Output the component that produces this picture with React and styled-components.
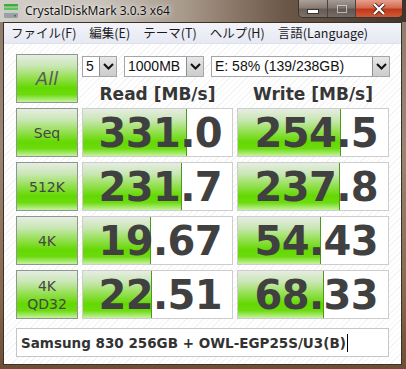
import React from "react";
import styled, { createGlobalStyle } from "styled-components";

const GlobalStyle = createGlobalStyle`
  html, body {
    margin: 0;
    padding: 0;
    background: #6e5a48;
  }
`;

const Window = styled.div`
  width: 406px;
  height: 369px;
  display: flex;
  flex-direction: column;
  background: linear-gradient(180deg, #8e7c6c 0%, #9a8674 40%, #86684e 80%, #6e4e36 100%);
  overflow: hidden;
`;

const TitleBar = styled.div`
  height: 22px;
  display: flex;
  align-items: flex-start;
  background: linear-gradient(
    90deg,
    #d2cec8 0%,
    #c8c2ba 25%,
    #a89a8c 45%,
    #8a7666 58%,
    #6c5848 70%,
    #5a4a3e 82%,
    #40342c 100%
  );
`;

const AppIcon = styled.svg`
  margin: 3px 0 0 3px;
  flex: none;
`;

const Title = styled.div`
  margin: 4px 0 0 6px;
  font-family: "Noto Sans", "Open Sans", sans-serif;
  font-size: 12px;
  line-height: 14px;
  color: #111;
  text-shadow: 0 0 6px rgba(255, 255, 255, 0.9), 0 0 2px rgba(255, 255, 255, 0.8);
`;

const Controls = styled.div`
  margin-left: auto;
  margin-right: 3px;
  display: flex;
  height: 17px;
  border: 1px solid #3a342e;
  border-top: none;
  border-radius: 0 0 5px 5px;
  overflow: hidden;
`;

const CtlButton = styled.div`
  width: ${(p) => p.$w}px;
  display: flex;
  align-items: center;
  justify-content: center;
  border-left: ${(p) => (p.$first ? "none" : "1px solid #4a443e")};
  background: ${(p) =>
    p.$close
      ? "linear-gradient(180deg, #e6a08e 0%, #d46a50 45%, #c0391c 55%, #d05a36 100%)"
      : "linear-gradient(180deg, rgba(255,255,255,0.45) 0%, rgba(230,230,230,0.3) 45%, rgba(120,120,120,0.35) 55%, rgba(160,160,160,0.4) 100%)"};
`;

const MinGlyph = styled.div`
  width: 10px;
  height: 3px;
  background: #fff;
  border: 1px solid #333;
  margin-top: 5px;
`;

const MaxGlyph = styled.div`
  width: 8px;
  height: 6px;
  border: 1px solid rgba(255, 255, 255, 0.55);
  box-shadow: inset 0 0 0 1px rgba(90, 90, 90, 0.4);
`;

const Panel = styled.div`
  flex: 1;
  margin: 0 4px 4px 3px;
  border: 1px solid #3c3028;
  display: flex;
  flex-direction: column;
`;

const MenuBar = styled.div`
  height: 21px;
  display: flex;
  align-items: center;
  padding-left: 1px;
  background: linear-gradient(180deg, #f3f4fa 0%, #e6e9f3 100%);
  border-bottom: 1px solid #dde1ec;
  box-sizing: border-box;
`;

const MenuItem = styled.div`
  padding: 0 6px;
  margin-right: 1px;
  font-family: "Noto Sans CJK JP", "Noto Sans", sans-serif;
  font-size: 12.5px;
  color: #1a1a1a;
  line-height: 16px;
`;

const Client = styled.div`
  flex: 1;
  padding: 10px 11px 0 12px;
  background: repeating-linear-gradient(-45deg, #ffffff 0 3px, #f4f4f4 3px 4px);
  display: flex;
  flex-direction: column;
`;

const TopRow = styled.div`
  display: flex;
  gap: 4px;
  height: 49px;
`;

const greenFill = `linear-gradient(
  180deg,
  #e6ede2 0%,
  #cbe7b8 22%,
  #95e052 48%,
  #64d802 70%,
  #6cdb0e 84%,
  #c6f2a0 100%
)`;

const LabelButton = styled.div`
  width: 62px;
  height: 49px;
  box-sizing: border-box;
  border: 1px solid #8d978d;
  background: ${greenFill};
  display: flex;
  flex-direction: column;
  align-items: center;
  justify-content: center;
  font-family: "DejaVu Sans", sans-serif;
  font-size: ${(p) => (p.$big ? "18px" : "14px")};
  font-style: ${(p) => (p.$big ? "italic" : "normal")};
  line-height: 18px;
  color: ${(p) => (p.$big ? "#5a5a5a" : "#464646")};
`;

const RightCol = styled.div`
  display: flex;
  flex-direction: column;
`;

const SelectRow = styled.div`
  display: flex;
  gap: 7px;
  margin-top: 2px;
  height: 21px;
`;

const Select = styled.div`
  width: ${(p) => p.$w}px;
  box-sizing: border-box;
  border: 1px solid #a4a6ac;
  background: #fff;
  display: flex;
  align-items: stretch;
  font-family: "Liberation Sans", sans-serif;
  font-size: 14px;
  color: #111;
`;

const SelectText = styled.div`
  flex: 1;
  padding-left: 3px;
  line-height: 19px;
  white-space: nowrap;
  overflow: hidden;
`;

const ArrowBtn = styled.div`
  width: 17px;
  margin: 0;
  box-sizing: border-box;
  border-left: 1px solid #8e8e8e;
  background: linear-gradient(180deg, #e8e8e8 0%, #d8d8d8 50%, #cdcdcd 100%);
  display: flex;
  align-items: center;
  justify-content: center;
`;

const HeaderRow = styled.div`
  flex: 1;
  display: grid;
  grid-template-columns: 151px 152px;
  column-gap: 4px;
  align-items: end;
`;

const Header = styled.div`
  text-align: center;
  font-family: "DejaVu Sans", sans-serif;
  font-weight: bold;
  font-size: 17px;
  line-height: 17px;
  color: #363636;
`;

const Rows = styled.div`
  display: flex;
  flex-direction: column;
  gap: 5px;
  margin-top: 5px;
`;

const Row = styled.div`
  display: grid;
  grid-template-columns: 62px 151px 152px;
  column-gap: 4px;
  height: 49px;
`;

const Cell = styled.div`
  position: relative;
  box-sizing: border-box;
  border: 1px solid #cdcdcd;
  background: #fff;
  overflow: hidden;
`;

const Bar = styled.div`
  position: absolute;
  left: 0;
  top: 0;
  bottom: 0;
  box-sizing: border-box;
  border-right: 1px solid #4c9a1a;
  background: ${greenFill};
`;

const Value = styled.div`
  position: relative;
  text-align: right;
  padding: 1px 10px 0 0;
  font-family: "DejaVu Sans", sans-serif;
  font-weight: bold;
  font-size: 40px;
  letter-spacing: -0.6px;
  line-height: 47px;
  color: #404040;
`;

const Comment = styled.div`
  margin-top: 9px;
  width: 373px;
  height: 29px;
  box-sizing: border-box;
  border: 1px solid #c6c6c6;
  background: #fff;
  display: flex;
  align-items: center;
  padding-left: 4px;
  font-family: "DejaVu Sans", sans-serif;
  font-weight: bold;
  font-size: 13.5px;
  color: #333;
  white-space: nowrap;
`;

const Caret = styled.span`
  display: inline-block;
  width: 1px;
  height: 18px;
  background: #000;
  margin-left: 1px;
`;

const Chevron = () => (
  <svg width="11" height="7" viewBox="0 0 11 7">
    <polyline points="1,1 5.5,5.5 10,1" fill="none" stroke="#111" strokeWidth="2" />
  </svg>
);

const results = [
  { label: "Seq", read: "331.0", readBar: 104, write: "254.5", writeBar: 103 },
  { label: "512K", read: "231.7", readBar: 99, write: "237.8", writeBar: 102 },
  { label: "4K", read: "19.67", readBar: 68, write: "54.43", writeBar: 83 },
  { label: ["4K", "QD32"], read: "22.51", readBar: 69, write: "68.33", writeBar: 86 },
];

const menus = ["ファイル(F)", "編集(E)", "テーマ(T)", "ヘルプ(H)", "言語(Language)"];

export default function App() {
  return (
    <>
      <GlobalStyle />
      <Window>
        <TitleBar>
          <AppIcon width="16" height="16" viewBox="0 0 16 16">
            <rect x="1" y="1" width="14" height="2.5" fill="#3cae3c" />
            <rect x="1" y="4.5" width="14" height="2.5" fill="#58c458" />
            <rect x="1" y="8" width="14" height="7" rx="1" fill="#9aa0a4" />
            <rect x="1" y="8" width="14" height="2" fill="#c8ccd0" />
            <rect x="11" y="12" width="2" height="1.5" fill="#3a7a3a" />
          </AppIcon>
          <Title>CrystalDiskMark 3.0.3 x64</Title>
          <Controls>
            <CtlButton $w={28} $first>
              <MinGlyph />
            </CtlButton>
            <CtlButton $w={27}>
              <MaxGlyph />
            </CtlButton>
            <CtlButton $w={46} $close>
              <svg width="14" height="12" viewBox="0 0 14 12">
                <path d="M2 1 L12 11 M12 1 L2 11" stroke="#4a2a22" strokeWidth="4" />
                <path d="M2 1 L12 11 M12 1 L2 11" stroke="#fff" strokeWidth="2.2" />
              </svg>
            </CtlButton>
          </Controls>
        </TitleBar>
        <Panel>
          <MenuBar>
            {menus.map((m) => (
              <MenuItem key={m}>{m}</MenuItem>
            ))}
          </MenuBar>
          <Client>
            <TopRow>
              <LabelButton $big>All</LabelButton>
              <RightCol>
                <SelectRow>
                  <Select $w={35}>
                    <SelectText>5</SelectText>
                    <ArrowBtn>
                      <Chevron />
                    </ArrowBtn>
                  </Select>
                  <Select $w={80}>
                    <SelectText>1000MB</SelectText>
                    <ArrowBtn>
                      <Chevron />
                    </ArrowBtn>
                  </Select>
                  <Select $w={179}>
                    <SelectText>E: 58% (139/238GB)</SelectText>
                    <ArrowBtn>
                      <Chevron />
                    </ArrowBtn>
                  </Select>
                </SelectRow>
                <HeaderRow>
                  <Header>Read [MB/s]</Header>
                  <Header>Write [MB/s]</Header>
                </HeaderRow>
              </RightCol>
            </TopRow>
            <Rows>
              {results.map((r) => (
                <Row key={r.read}>
                  <LabelButton>
                    {Array.isArray(r.label)
                      ? r.label.map((l) => <div key={l}>{l}</div>)
                      : r.label}
                  </LabelButton>
                  <Cell>
                    <Bar style={{ width: r.readBar + "px" }} />
                    <Value>{r.read}</Value>
                  </Cell>
                  <Cell>
                    <Bar style={{ width: r.writeBar + "px" }} />
                    <Value>{r.write}</Value>
                  </Cell>
                </Row>
              ))}
            </Rows>
            <Comment>
              Samsung 830 256GB + OWL-EGP25S/U3(B)
              <Caret />
            </Comment>
          </Client>
        </Panel>
      </Window>
    </>
  );
}
